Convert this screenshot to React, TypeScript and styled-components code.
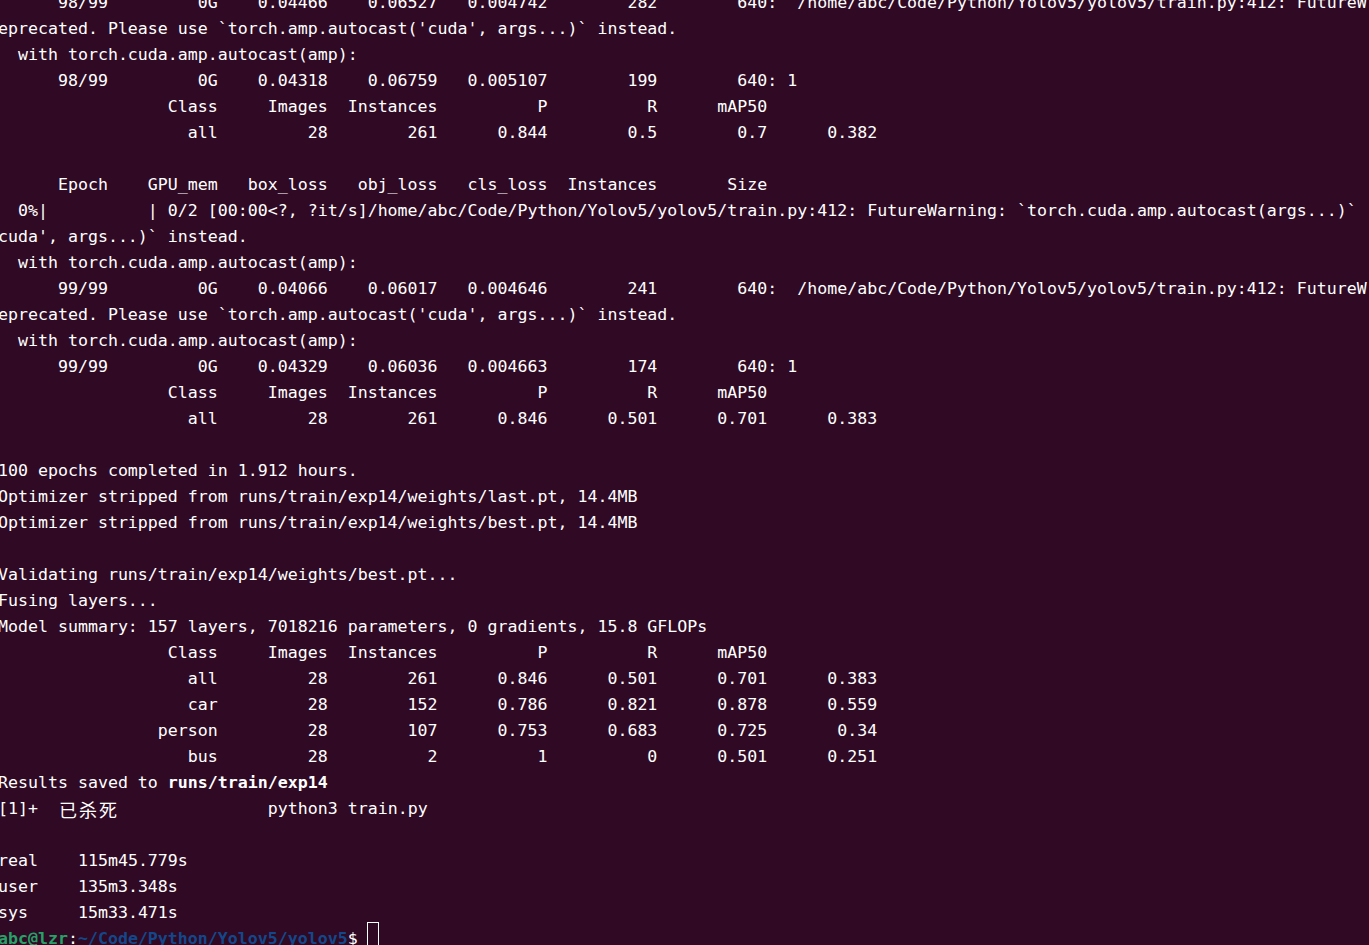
import React from "react";
import styled, { createGlobalStyle } from "styled-components";

const Global = createGlobalStyle`
  html, body {
    margin: 0;
    padding: 0;
    background: #300a24;
    overflow: hidden;
  }
  #root {
    width: 1369px;
    height: 945px;
    overflow: hidden;
  }
`;

const Terminal = styled.div`
  width: 1369px;
  height: 945px;
  overflow: hidden;
  background: #300a24;
  color: #ffffff;
  font-family: "DejaVu Sans Mono", "Liberation Mono", monospace;
  font-size: 16.6px;
`;

const Scroll = styled.div`
  display: flex;
  flex-direction: column;
  margin-top: -10px;
  margin-left: -2px;
`;

const Line = styled.div`
  height: 26px;
  line-height: 26px;
  white-space: pre;
  tab-size: 8;
`;

const Bold = styled.span<{ $tone?: "green" | "blue" | "white" }>`
  font-weight: bold;
  color: ${(p) =>
    p.$tone === "green" ? "#26a269" : p.$tone === "blue" ? "#12488b" : "#ffffff"};
`;

const Wide = styled.span`
  display: inline-block;
  width: 20px;
  text-align: center;
  font-family: "Noto Sans CJK SC", "Noto Sans CJK JP", sans-serif;
  font-size: 18px;
  line-height: 26px;
  vertical-align: top;
`;

const Cursor = styled.span`
  display: inline-block;
  width: 12px;
  height: 28px;
  margin-left: -1px;
  box-sizing: border-box;
  border: 1px solid #ffffff;
  vertical-align: top;
  transform: translateY(-4px);
`;

const warnTail = "/home/abc/Code/Python/Yolov5/yolov5/train.py:412: FutureW";

const lines: string[] = [
  "      98/99         0G    0.04466    0.06527   0.004742        282        640:  " + warnTail,
  "eprecated. Please use `torch.amp.autocast('cuda', args...)` instead.",
  "  with torch.cuda.amp.autocast(amp):",
  "      98/99         0G    0.04318    0.06759   0.005107        199        640: 1",
  "                 Class     Images  Instances          P          R      mAP50",
  "                   all         28        261      0.844        0.5        0.7      0.382",
  "",
  "      Epoch    GPU_mem   box_loss   obj_loss   cls_loss  Instances       Size",
  "  0%|          | 0/2 [00:00<?, ?it/s]/home/abc/Code/Python/Yolov5/yolov5/train.py:412: FutureWarning: `torch.cuda.amp.autocast(args...)`",
  "cuda', args...)` instead.",
  "  with torch.cuda.amp.autocast(amp):",
  "      99/99         0G    0.04066    0.06017   0.004646        241        640:  " + warnTail,
  "eprecated. Please use `torch.amp.autocast('cuda', args...)` instead.",
  "  with torch.cuda.amp.autocast(amp):",
  "      99/99         0G    0.04329    0.06036   0.004663        174        640: 1",
  "                 Class     Images  Instances          P          R      mAP50",
  "                   all         28        261      0.846      0.501      0.701      0.383",
  "",
  "100 epochs completed in 1.912 hours.",
  "Optimizer stripped from runs/train/exp14/weights/last.pt, 14.4MB",
  "Optimizer stripped from runs/train/exp14/weights/best.pt, 14.4MB",
  "",
  "Validating runs/train/exp14/weights/best.pt...",
  "Fusing layers...",
  "Model summary: 157 layers, 7018216 parameters, 0 gradients, 15.8 GFLOPs",
  "                 Class     Images  Instances          P          R      mAP50",
  "                   all         28        261      0.846      0.501      0.701      0.383",
  "                   car         28        152      0.786      0.821      0.878      0.559",
  "                person         28        107      0.753      0.683      0.725       0.34",
  "                   bus         28          2          1          0      0.501      0.251",
];

export default function App() {
  return (
    <Terminal>
      <Global />
      <Scroll>
        {lines.map((l, i) => (
          <Line key={i}>{l}</Line>
        ))}
        <Line>
          Results saved to <Bold>runs/train/exp14</Bold>
        </Line>
        <Line>
          {"[1]+  "}
          <Wide>已</Wide>
          <Wide>杀</Wide>
          <Wide>死</Wide>
          {"               python3 train.py"}
        </Line>
        <Line />
        <Line>{"real\t115m45.779s"}</Line>
        <Line>{"user\t135m3.348s"}</Line>
        <Line>{"sys\t15m33.471s"}</Line>
        <Line>
          <Bold $tone="green">abc@lzr</Bold>:<Bold $tone="blue">~/Code/Python/Yolov5/yolov5</Bold>
          {"$ "}
          <Cursor />
        </Line>
      </Scroll>
    </Terminal>
  );
}
